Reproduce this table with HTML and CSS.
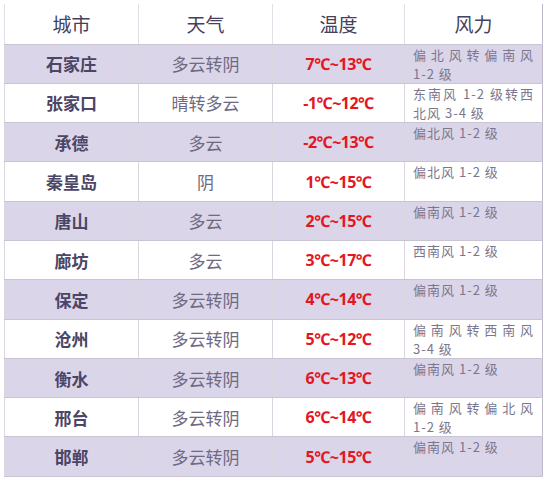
FILE: index.html
```html
<!DOCTYPE html>
<html lang="zh">
<head>
<meta charset="utf-8">
<link rel="stylesheet" href="styles.css">
</head>
<body>
<table class="weather">
  <colgroup>
    <col class="c1"><col class="c2"><col class="c3"><col class="c4">
  </colgroup>
  <thead>
    <tr><th>城市</th><th>天气</th><th>温度</th><th>风力</th></tr>
  </thead>
  <tbody>
    <tr class="alt"><td class="city">石家庄</td><td class="sky">多云转阴</td><td class="temp">7℃~13℃</td><td class="wind"><div class="j">偏北风转偏南风</div><div>1-2 级</div></td></tr>
    <tr><td class="city">张家口</td><td class="sky">晴转多云</td><td class="temp">-1℃~12℃</td><td class="wind"><div class="j">东南风 1-2 级转西</div><div>北风 3-4 级</div></td></tr>
    <tr class="alt"><td class="city">承德</td><td class="sky">多云</td><td class="temp">-2℃~13℃</td><td class="wind"><div>偏北风 1-2 级</div></td></tr>
    <tr><td class="city">秦皇岛</td><td class="sky">阴</td><td class="temp">1℃~15℃</td><td class="wind"><div>偏北风 1-2 级</div></td></tr>
    <tr class="alt"><td class="city">唐山</td><td class="sky">多云</td><td class="temp">2℃~15℃</td><td class="wind"><div>偏南风 1-2 级</div></td></tr>
    <tr><td class="city">廊坊</td><td class="sky">多云</td><td class="temp">3℃~17℃</td><td class="wind"><div>西南风 1-2 级</div></td></tr>
    <tr class="alt"><td class="city">保定</td><td class="sky">多云转阴</td><td class="temp">4℃~14℃</td><td class="wind"><div>偏南风 1-2 级</div></td></tr>
    <tr><td class="city">沧州</td><td class="sky">多云转阴</td><td class="temp">5℃~12℃</td><td class="wind"><div class="j">偏南风转西南风</div><div>3-4 级</div></td></tr>
    <tr class="alt"><td class="city">衡水</td><td class="sky">多云转阴</td><td class="temp">6℃~13℃</td><td class="wind"><div>偏南风 1-2 级</div></td></tr>
    <tr><td class="city">邢台</td><td class="sky">多云转阴</td><td class="temp">6℃~14℃</td><td class="wind"><div class="j">偏南风转偏北风</div><div>1-2 级</div></td></tr>
    <tr class="alt"><td class="city">邯郸</td><td class="sky">多云转阴</td><td class="temp">5℃~15℃</td><td class="wind"><div>偏南风 1-2 级</div></td></tr>
  </tbody>
</table>
</body>
</html>
```
FILE: styles.css
```css
html, body {
  margin: 0;
  padding: 0;
  background: #ffffff;
}
body {
  padding: 4px 0 0 4px;
  font-family: "Noto Sans CJK SC", "Noto Sans", sans-serif;
}
.weather {
  border-collapse: collapse;
  table-layout: fixed;
  width: 538px;
  border-right: 1px solid #bdb9c8;
  border-bottom: 1px solid #bdb9c8;
  border-left: 1px solid #e4e1ea;
}
.c1 { width: 134px; }
.c2 { width: 134px; }
.c3 { width: 132px; }
.c4 { width: 138px; }
.weather thead tr {
  height: 40px;
}
.weather tbody tr {
  height: 39.3px;
}
.weather th {
  padding: 0;
  font-size: 19px;
  font-weight: normal;
  color: #45405c;
  text-align: center;
  vertical-align: middle;
  border-left: 1px solid #e2dfe8;
  border-bottom: 1px solid #c8c4d2;
  line-height: 1;
}
.weather td {
  padding: 0;
  text-align: center;
  vertical-align: middle;
  border-left: 1px solid #d9d6e0;
  border-bottom: 1px solid #c8c4d2;
  line-height: 1;
}
.weather tr.alt td {
  background: #dbd5e9;
}
.city {
  font-size: 17px;
  font-weight: 700;
  color: #4b4566;
}
.sky {
  font-size: 17px;
  color: #6e6a82;
}
.temp {
  font-family: "Noto Sans", "Noto Sans CJK SC", sans-serif;
  font-size: 16px;
  font-weight: 700;
  color: #e4161f;
  letter-spacing: -0.5px;
}
.weather td.wind {
  vertical-align: top;
  text-align: left;
  padding: 0 8px;
  font-size: 13px;
  letter-spacing: 1px;
  line-height: 19px;
  color: #7b778e;
}
.wind .j {
  text-align: justify;
  text-align-last: justify;
}
```
